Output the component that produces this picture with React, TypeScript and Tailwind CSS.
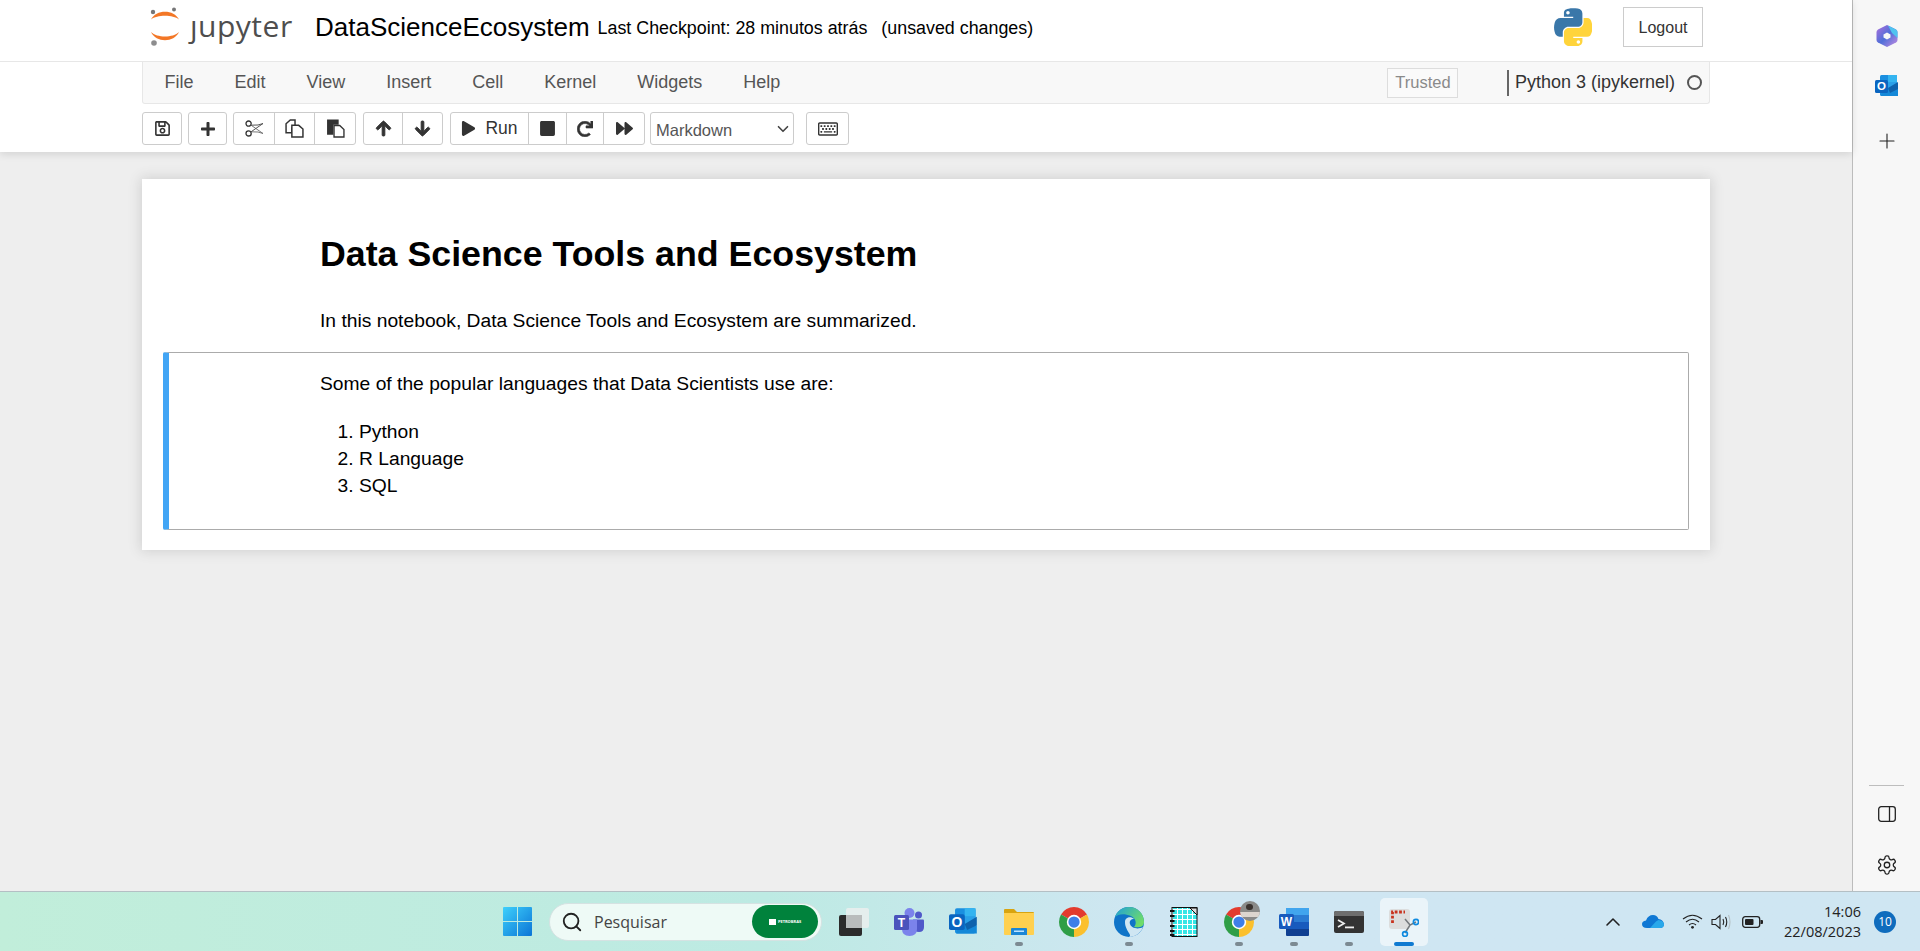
import { FaArrowDown, FaArrowUp, FaForward, FaPlay, FaPlus, FaRedo, FaRegKeyboard, FaRegSave, FaStop } from "react-icons/fa";
import { LuChevronDown, LuChevronUp, LuPlus, LuSearch, LuSettings } from "react-icons/lu";

const menus = ["File", "Edit", "View", "Insert", "Cell", "Kernel", "Widgets", "Help"];
const languages = ["Python", "R Language", "SQL"];

const JupyterLogo = () => (
    <svg width="32" height="40" viewBox="0 0 32 40" className="shrink-0">
        <path d="M2 12.5 C7 2 25 2 30 12.5 C24 7.5 8 7.5 2 12.5Z" fill="#f37726" />
        <path d="M2 25 C8 31 24 31 30 25 C25 36 7 36 2 25Z" fill="#f37726" />
        <circle cx="4" cy="5" r="2.2" fill="#767677" />
        <circle cx="25" cy="2.5" r="2" fill="#767677" />
        <circle cx="5" cy="36" r="2.8" fill="#8d8d8e" />
    </svg>
);

const PythonLogo = () => (
    <svg width="38" height="38" viewBox="0 0 110 110">
        <path fillRule="evenodd" fill="#3a77a9" d="M54.9 0.8c-4.6 0-9 .4-12.8 1.1C30.8 3.9 28.8 8 28.8 15.6v10h26.8v3.4H18.7c-7.8 0-14.6 4.7-16.7 13.6-2.5 10.2-2.6 16.6 0 27.2 1.9 7.9 6.4 13.6 14.2 13.6h9.2V71.2c0-8.8 7.6-16.6 16.7-16.6h26.7c7.4 0 13.4-6.1 13.4-13.6V15.6c0-7.3-6.1-12.7-13.4-13.9C64 1 59.5.8 54.9.8z M40.4 9c2.8 0 5 2.3 5 5.1 0 2.8-2.2 5-5 5-2.8 0-5-2.3-5-5 0-2.8 2.3-5.1 5-5.1z" />
        <path fillRule="evenodd" fill="#ffd43b" d="M85.6 29v11.9c0 9.2-7.8 17-16.7 17H42.2c-7.3 0-13.4 6.3-13.4 13.6v25.5c0 7.3 6.3 11.5 13.4 13.6 8.5 2.5 16.7 2.9 26.7 0 6.8-1.9 13.4-5.9 13.4-13.6V86.9H55.7v-3.4h40.1c7.8 0 10.7-5.4 13.4-13.6 2.8-8.4 2.7-16.5 0-27.2-1.9-7.7-5.6-13.6-13.4-13.6H85.6z M70.6 93.6c2.8 0 5 2.3 5 5 0 2.8-2.3 5.1-5 5.1-2.8 0-5-2.3-5-5.1 0-2.8 2.3-5 5-5z" />
    </svg>
);

const ScissorsIcon = () => (
    <svg width="19" height="17" viewBox="0 0 19 17" fill="none" stroke="#333" strokeWidth="1.3">
        <circle cx="3.6" cy="3.6" r="2.6" />
        <circle cx="3.6" cy="13.4" r="2.6" />
        <path d="M5.8 5 L18 13.5 L13 12 L5.8 11.8" strokeWidth="1" stroke="#777" />
        <path d="M5.8 12 L18 3.5 L13 5 L5.8 5.2" strokeWidth="1" stroke="#555" />
    </svg>
);

const CopyIcon = () => (
    <svg width="19" height="19" viewBox="0 0 18 18" fill="white" stroke="#333" strokeWidth="1.4">
        <path d="M1 4.5 L5 1 H9.5 V6 L6.5 8.5 V13 H1Z" />
        <path d="M6.5 6 H13 L17 9.5 V17 H6.5Z" />
    </svg>
);

const PasteIcon = () => (
    <svg width="19" height="19" viewBox="0 0 18 18">
        <path d="M1 0.5 H12 V5.5 H7 V15 H1Z" fill="#333" />
        <path d="M7.6 6.2 H13 L17 10 V17 H7.6Z" fill="white" stroke="#333" strokeWidth="1.3" />
    </svg>
);

const ToolButton = ({ children, className = "" }: { children: React.ReactNode; className?: string }) => (
    <div className={`flex h-full items-center justify-center border-r border-[#ccc] last:border-r-0 text-[#333] ${className}`}>
        {children}
    </div>
);

const ToolGroup = ({ children, className = "" }: { children: React.ReactNode; className?: string }) => (
    <div className={`flex h-[33px] items-center rounded-[3px] border border-[#ccc] bg-white ${className}`}>{children}</div>
);

const Toolbar = () => (
    <div className="mt-2 ml-[142px] flex items-center">
        <ToolGroup className="w-[40px]"><ToolButton className="w-full"><FaRegSave size={17} /></ToolButton></ToolGroup>
        <ToolGroup className="ml-[6px] w-[39px]"><ToolButton className="w-full"><FaPlus size={16} /></ToolButton></ToolGroup>
        <ToolGroup className="ml-[6px]">
            <ToolButton className="w-[41px]"><ScissorsIcon /></ToolButton>
            <ToolButton className="w-[40px]"><CopyIcon /></ToolButton>
            <ToolButton className="w-[40px]"><PasteIcon /></ToolButton>
        </ToolGroup>
        <ToolGroup className="ml-[7px]">
            <ToolButton className="w-[39px]"><FaArrowUp size={17} stroke="currentColor" strokeWidth={30} /></ToolButton>
            <ToolButton className="w-[39px]"><FaArrowDown size={17} stroke="currentColor" strokeWidth={30} /></ToolButton>
        </ToolGroup>
        <ToolGroup className="ml-[7px]">
            <ToolButton className="w-[78px] gap-[9px] text-[17.5px]"><FaPlay size={15} /><span>Run</span></ToolButton>
            <ToolButton className="w-[38px]"><FaStop size={17} /></ToolButton>
            <ToolButton className="w-[37px]"><FaRedo size={16} stroke="currentColor" strokeWidth={20} /></ToolButton>
            <ToolButton className="w-[40px]"><FaForward size={17} /></ToolButton>
        </ToolGroup>
        <div className="ml-[5px] flex h-[33px] w-[144px] items-center justify-between rounded-[3px] border border-[#ccc] bg-white pt-[4px] pr-[1px] pl-[5px] text-[16.5px] text-[#555]">
            <span>Markdown</span>
            <LuChevronDown size={18} strokeWidth={2.2} className="mt-[-3px] text-[#444]" />
        </div>
        <ToolGroup className="ml-[12px] w-[43px]"><ToolButton className="w-full"><FaRegKeyboard size={20} /></ToolButton></ToolGroup>
    </div>
);

const Header = () => (
    <header className="relative h-[152px] shrink-0 bg-white shadow-[0_2px_8px_rgba(0,0,0,0.12)]">
        <div className="flex h-[62px] items-center border-b border-[#e7e7e7] pb-[7px] pl-[149px]">
            <JupyterLogo />
            <span className="mt-[-2px] ml-[9px] w-[114px] font-['Open_Sans',sans-serif] text-[30px] leading-none tracking-[0.5px] text-[#4e4e4e]">ȷupyter</span>
            <span className="ml-[11px] text-[26px] text-black">DataScienceEcosystem</span>
            <span className="mt-[2px] ml-[8px] text-[17.85px] text-black">Last Checkpoint: 28 minutos atrás</span>
            <span className="mt-[2px] ml-[14px] text-[17.85px] text-black">(unsaved changes)</span>
            <div className="mr-[149px] ml-auto flex items-center">
                <PythonLogo />
                <div className="ml-[31px] flex h-[40px] w-[80px] items-center justify-center border border-[#ccc] pt-[1px] text-[16px] text-[#333]">Logout</div>
            </div>
        </div>
        <div className="ml-[142px] flex h-[42px] w-[1568px] items-center rounded-b-[3px] border-x border-b border-[#e7e7e7] bg-[#f8f8f8] pl-[1px] text-[18px] text-[#555]">
            {menus.map((m) => (
                <span key={m} className="px-[20.5px]">{m}</span>
            ))}
            <div className="ml-auto flex h-[30px] w-[71px] items-center justify-center border border-[#ddd] bg-[#fafafa] text-[16.5px] text-[#8a8a8a]">Trusted</div>
            <div className="ml-[49px] h-[26px] w-[1.5px] bg-[#666]" />
            <span className="ml-[6px] text-[#333]">Python 3 (ipykernel)</span>
            <div className="mr-[7px] ml-[12px] h-[15px] w-[15px] rounded-full border-[2.5px] border-[#555]" />
        </div>
        <Toolbar />
    </header>
);

const Notebook = () => (
    <main className="flex-1 overflow-hidden bg-[#eeeeee] pt-[27px] pl-[142px]">
        <div className="h-[371px] w-[1568px] bg-white px-[21px] pt-[55px] text-[19.25px] leading-[27px] text-black shadow-[0_0_12px_1px_rgba(87,87,87,0.2)]">
            <h1 className="pl-[157px] text-[35.75px] leading-[40px] font-bold">Data Science Tools and Ecosystem</h1>
            <p className="mt-[33px] pl-[157px]">In this notebook, Data Science Tools and Ecosystem are summarized.</p>
            <div className="mt-[18px] h-[178px] rounded-[2px] border border-l-[6px] border-[#ababab] border-l-[#42a5f5] pt-[17px] pl-[151px]">
                <p>Some of the popular languages that Data Scientists use are:</p>
                <ol className="mt-[21px] list-decimal pl-[39px]">
                    {languages.map((l) => <li key={l}>{l}</li>)}
                </ol>
            </div>
        </div>
    </main>
);

const CopilotIcon = () => (
    <svg width="22" height="24" viewBox="0 0 22 24">
        <defs>
            <linearGradient id="cp" x1="0" y1="0" x2="1" y2="1">
                <stop offset="0" stopColor="#b06fdc" />
                <stop offset="0.5" stopColor="#4f6fd8" />
                <stop offset="1" stopColor="#c98ce2" />
            </linearGradient>
        </defs>
        <path d="M11 1 L20 5.5 Q21.5 6.5 21.5 8 V16 Q21.5 17.5 20 18.5 L11 23 L2 18.5 Q0.5 17.5 0.5 16 V8 Q0.5 6.5 2 5.5Z" fill="url(#cp)" />
        <path d="M12 1.5 L20 5.5 Q21.5 6.5 21.5 8 V14 L16 9Z" fill="#4fc3f0" />
        <path d="M11 8.5 L14.5 10.5 V13.5 L11 15.5 L7.5 13.5 V10.5Z" fill="#f7f7f7" />
    </svg>
);

const OutlookIcon = ({ size = 24 }: { size?: number }) => (
    <svg width={size} height={size} viewBox="0 0 24 24">
        <rect x="5" y="1" width="17" height="21" rx="1.5" fill="#1a8fe0" />
        <rect x="13" y="1" width="9" height="7" fill="#34b4f0" />
        <rect x="5" y="8" width="8" height="7" fill="#0f6cbd" />
        <rect x="13" y="8" width="9" height="7" fill="#2aa0e8" />
        <path d="M8 15 L23 15 V22 H6Z" fill="#1488d8" />
        <path d="M13 14 L23 8 V15 L15 19Z" fill="#0e62ad" />
        <rect x="0" y="6" width="13" height="13" rx="1.5" fill="#0a65c0" />
        <text x="6.5" y="16.4" textAnchor="middle" fontSize="11.5" fontWeight="700" fill="white" fontFamily="Liberation Sans, sans-serif">O</text>
    </svg>
);

const Sidebar = () => (
    <aside className="flex w-[68px] shrink-0 flex-col items-center border-l-[1px] border-[#bcbcbc] bg-[#f7f7f7] pt-[24px] pb-[15px]">
        <CopilotIcon />
        <div className="mt-[26px]"><OutlookIcon /></div>
        <LuPlus size={24} strokeWidth={1.1} className="mt-[31px] text-[#222]" />
        <div className="mt-auto h-px w-[35px] bg-[#bdbdbd]" />
        <svg width="18" height="16" viewBox="0 0 18 16" fill="none" stroke="#222" strokeWidth="1.3" className="mt-[20px]">
            <rect x="0.7" y="0.7" width="16.6" height="14.6" rx="2.5" />
            <path d="M11.5 0.7 V15.3" />
        </svg>
        <LuSettings size={22} strokeWidth={1.4} className="mt-[32px] text-[#222]" />
    </aside>
);

const WindowsIcon = () => (
    <svg width="29" height="29" viewBox="0 0 29 29">
        <defs>
            <linearGradient id="win" x1="0" y1="0" x2="1" y2="1">
                <stop offset="0" stopColor="#3fd0fb" />
                <stop offset="1" stopColor="#0a74d6" />
            </linearGradient>
        </defs>
        <path fill="url(#win)" d="M1 0H14V14H0V1Q0 0 1 0ZM15 0H28Q29 0 29 1V14H15ZM0 15H14V29H1Q0 29 0 28ZM15 15H29V28Q29 29 28 29H15Z" />
    </svg>
);

const TaskViewIcon = () => (
    <svg width="30" height="28" viewBox="0 0 30 28">
        <rect x="0" y="7" width="23" height="21" rx="2" fill="#2b2b2b" />
        <rect x="7" y="0" width="23" height="20" rx="2" fill="#e9eeee" fillOpacity="0.88" />
        <rect x="7" y="7" width="16" height="13" fill="#b9bcbc" />
    </svg>
);

const TeamsIcon = () => (
    <svg width="30" height="28" viewBox="0 0 30 28">
        <circle cx="24.5" cy="7" r="3.5" fill="#5059c9" />
        <path d="M19 11.5 H29 Q30 11.5 30 12.5 V19 Q30 24 25 24 Q20 24 19 20Z" fill="#5059c9" />
        <circle cx="15.5" cy="5" r="5" fill="#7b83eb" />
        <path d="M8 11.5 H23 V21 Q23 28 15.5 28 Q8 28 8 21Z" fill="#7b83eb" />
        <rect x="0" y="7" width="15" height="15" rx="1.5" fill="#4b53bc" />
        <text x="7.5" y="18.6" textAnchor="middle" fontSize="12" fontWeight="700" fill="white" fontFamily="Liberation Sans, sans-serif">T</text>
    </svg>
);

const FolderIcon = () => (
    <svg width="30" height="26" viewBox="0 0 30 26">
        <path d="M1 0 H10 L13 3 H29 Q30 3 30 4 V8 H0 V1 Q0 0 1 0Z" fill="#d8a410" />
        <path d="M0 4 H30 V25 Q30 26 29 26 H1 Q0 26 0 25Z" fill="#ffd04f" />
        <path d="M7 26 V20 Q7 19 8 19 H22 Q23 19 23 20 V26Z" fill="#1b86d6" />
        <rect x="10" y="21.5" width="10" height="1.5" fill="#bfe3ff" />
    </svg>
);

const ChromeIcon = () => (
    <svg width="30" height="30" viewBox="0 0 48 48">
        <path d="M24 24 L41.3 14 A20 20 0 0 0 6.7 14Z" transform="scale(1.2) translate(-4 -4)" fill="#e33b2e" />
        <path d="M24 24 L6.7 14 A20 20 0 0 0 24 44Z" transform="scale(1.2) translate(-4 -4)" fill="#2f9e47" />
        <path d="M24 24 L24 44 A20 20 0 0 0 41.3 14Z" transform="scale(1.2) translate(-4 -4)" fill="#fbc02d" />
        <circle cx="24" cy="24" r="11.5" fill="white" />
        <circle cx="24" cy="24" r="9" fill="#3f7fe8" />
    </svg>
);

const EdgeIcon = () => (
    <svg width="30" height="30" viewBox="0 0 30 30">
        <defs>
            <linearGradient id="edge" x1="0" y1="0" x2="1" y2="0.6">
                <stop offset="0" stopColor="#1fa0d8" />
                <stop offset="1" stopColor="#6fdc6a" />
            </linearGradient>
        </defs>
        <circle cx="15" cy="15" r="15" fill="#0f74c8" />
        <path d="M1 10 C4 1 12 0 15 0 C24 0 30 7 30 15 C30 20 25 21 20 20 C23 17 22 11 17 9 C10 6 4 7 1 10Z" fill="url(#edge)" />
        <path d="M11 15 C11 10 17 9 20 12 C17 12 15 14 16 17 C17 21 24 23 29 20 C27 26 21 30 15 30 C19 28 11 24 11 15Z" fill="#cfe6f2" />
    </svg>
);

const NotebookIcon = () => (
    <svg width="28" height="30" viewBox="0 0 28 30">
        <defs>
            <pattern id="grid" width="5" height="5" patternUnits="userSpaceOnUse">
                <rect width="5" height="5" fill="#35e6e6" />
                <rect x="2" y="0" width="1" height="5" fill="white" />
                <rect x="0" y="2" width="5" height="1" fill="white" />
            </pattern>
        </defs>
        <rect x="2" y="0.5" width="25" height="29" fill="url(#grid)" stroke="#111" strokeWidth="1" />
        <path d="M20 1 H27 V8Z" fill="#ddd" stroke="#111" strokeWidth="1" />
        {[3, 8, 13, 18, 23, 27].map((y) => (
            <rect key={y} x="0" y={y} width="4.5" height="2" fill="#111" />
        ))}
    </svg>
);

const ChromeProfileIcon = () => (
    <div className="relative h-[30px] w-[30px]">
        <ChromeIcon />
        <div className="absolute -top-[6px] -right-[6px] h-[20px] w-[20px] overflow-hidden rounded-full bg-[#8a8a88]">
            <div className="mx-auto mt-[3px] h-[6px] w-[7px] rounded-full bg-[#3a322e]" />
            <div className="mt-[2px] h-[5px] bg-[#dcd5cf]" />
        </div>
    </div>
);

const WordIcon = () => (
    <svg width="30" height="28" viewBox="0 0 30 28">
        <rect x="7" y="0" width="23" height="7" fill="#41a5ee" />
        <rect x="7" y="7" width="23" height="7" fill="#2b7cd3" />
        <rect x="7" y="14" width="23" height="7" fill="#185abd" />
        <path d="M7 21 H30 V27 Q30 28 29 28 H8 Q7 28 7 27Z" fill="#103f91" />
        <rect x="0" y="6" width="15" height="15" rx="1.5" fill="#185abd" />
        <text x="7.5" y="17.8" textAnchor="middle" fontSize="12" fontWeight="700" fill="white" fontFamily="Liberation Sans, sans-serif">W</text>
    </svg>
);

const TerminalIcon = () => (
    <svg width="30" height="22" viewBox="0 0 30 22">
        <rect width="30" height="22" rx="2" fill="#333" />
        <path d="M2 0 H28 Q30 0 30 2 V5 H0 V2 Q0 0 2 0Z" fill="#6e6e6e" />
        <path d="M4 9 L10 12.5 L4 16" fill="none" stroke="#eee" strokeWidth="1.7" />
        <rect x="11" y="15.5" width="9" height="1.8" fill="#eee" />
    </svg>
);

const SnipIcon = () => (
    <svg width="30" height="30" viewBox="0 0 30 30">
        <rect x="0" y="2" width="21" height="20" rx="3" fill="#dcdddd" />
        <path d="M3.5 16 V5 H16" fill="none" stroke="#c8331f" strokeWidth="2.8" strokeDasharray="2.8 1.6" />
        <path d="M16 12 L21 18 M27 15 L21 18 L16 26" fill="none" stroke="#74797d" strokeWidth="1.5" />
        <circle cx="27" cy="15" r="2.6" fill="none" stroke="#0f8ae0" strokeWidth="1.7" />
        <circle cx="16" cy="27" r="2.4" fill="none" stroke="#0f8ae0" strokeWidth="1.7" />
    </svg>
);

const taskIcons: { key: string; icon: React.ReactNode; open?: boolean }[] = [
    { key: "view", icon: <TaskViewIcon /> },
    { key: "teams", icon: <TeamsIcon /> },
    { key: "outlook", icon: <OutlookIcon size={29} /> },
    { key: "folder", icon: <FolderIcon />, open: true },
    { key: "chrome", icon: <ChromeIcon /> },
    { key: "edge", icon: <EdgeIcon />, open: true },
    { key: "notebook", icon: <NotebookIcon /> },
    { key: "chrome2", icon: <ChromeProfileIcon />, open: true },
    { key: "word", icon: <WordIcon />, open: true },
    { key: "terminal", icon: <TerminalIcon />, open: true },
];

const Taskbar = () => (
    <footer className="flex h-[60px] shrink-0 items-center border-t border-[#b4bfc4] bg-gradient-to-r from-[#c1eeda] via-[#bdeae3] via-40% to-[#cfe6f2] to-60% pl-[503px] font-['Open_Sans',sans-serif]">
        <WindowsIcon />
        <div className="ml-[17px] flex h-[38px] w-[273px] items-center rounded-full border border-[#d5e2e2] bg-[#eefaf6] pr-[3px] pl-[11px]">
            <LuSearch size={22} strokeWidth={2} className="text-[#222]" />
            <span className="ml-[11px] text-[16px] text-[#444]">Pesquisar</span>
            <div className="ml-auto flex h-[33px] w-[66px] items-center justify-center gap-[2px] rounded-full bg-[#00823c] text-[4px] font-bold text-white">
                <span className="h-[6px] w-[7px] bg-white" />
                PETROBRAS
            </div>
        </div>
        <div className="ml-[4px] flex">
            {taskIcons.map(({ key, icon, open }) => (
                <div key={key} className="relative flex h-[58px] w-[55px] items-center justify-center">
                    {icon}
                    {open && <span className="absolute bottom-[5px] h-[4px] w-[8px] rounded-full bg-[#7c8a92]" />}
                </div>
            ))}
        </div>
        <div className="relative ml-[4px] flex h-[48px] w-[48px] items-center justify-center rounded-[5px] bg-[#eaf4f9]">
            <SnipIcon />
            <span className="absolute bottom-0 h-[4px] w-[20px] rounded-full bg-[#0f7ad1]" />
        </div>
        <div className="ml-[173px] flex items-center text-[#222]">
            <LuChevronUp size={24} strokeWidth={1.6} />
            <svg width="22" height="14" viewBox="0 0 22 14" className="ml-[17px]">
                <path d="M5 13 Q0 13 0 9 Q0 6 4 5.5 Q6 0 11 0 Q15 0 16.5 4 Q21 4.5 22 9 Q22 13 18 13Z" fill="#0f78d4" />
                <path d="M8 13 L14 6.5 Q15 5.5 16.5 5 Q21 5.5 22 9 Q22 13 18 13Z" fill="#29a8ea" />
            </svg>
            <svg width="21" height="15" viewBox="0 0 21 15" fill="none" stroke="#222" strokeWidth="1.1" className="ml-[18px]">
                <path d="M1 5 Q10.5 -2.5 20 5" />
                <path d="M4 8 Q10.5 2.5 17 8" />
                <path d="M7 11 Q10.5 8 14 11" />
                <circle cx="10.5" cy="13.3" r="1.4" fill="#222" stroke="none" />
            </svg>
            <svg width="20" height="16" viewBox="0 0 20 16" fill="none" strokeWidth="1.1" stroke="#222" className="ml-[8px]">
                <path d="M1 5.5 H4.5 L9 1.5 V14.5 L4.5 10.5 H1Z" />
                <path d="M12 5 Q13.5 8 12 11" />
                <path d="M14.5 3 Q17 8 14.5 13" />
                <path d="M17.5 1 Q20.5 8 17.5 15" stroke="#b5c0c5" />
            </svg>
            <svg width="21" height="12" viewBox="0 0 21 12" className="ml-[11px]">
                <rect x="0.7" y="0.7" width="17" height="10.6" rx="2.5" fill="none" stroke="#222" strokeWidth="1.3" />
                <rect x="3" y="3" width="8.5" height="6" rx="1" fill="#222" />
                <path d="M18.5 4 H20 Q21 4 21 5 V7 Q21 8 20 8 H18.5Z" fill="#222" />
            </svg>
        </div>
        <div className="ml-auto flex items-center pr-[24px]">
            <div className="text-right text-[14.5px] leading-[20px] text-[#222]">
                <div>14:06</div>
                <div>22/08/2023</div>
            </div>
            <div className="ml-[13px] flex h-[22px] w-[22px] items-center justify-center rounded-full bg-[#0f6cbd] text-[12px] text-white">10</div>
        </div>
    </footer>
);

export default function App() {
    return (
        <div className="flex h-[951px] w-[1920px] flex-col overflow-hidden font-['Liberation_Sans',Arial,sans-serif]">
            <div className="flex min-h-0 flex-1">
                <div className="flex min-w-0 flex-1 flex-col">
                    <Header />
                    <Notebook />
                </div>
                <Sidebar />
            </div>
            <Taskbar />
        </div>
    );
}
